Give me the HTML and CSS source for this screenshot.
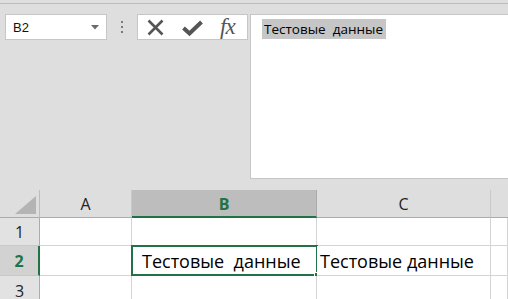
FILE: index.html
```html
<!DOCTYPE html>
<html>
<head>
<meta charset="utf-8">
<link rel="stylesheet" href="styles.css">
</head>
<body>
<div class="app">
  <div class="topstrip"></div>
  <div class="toolbar">
    <div class="left">
      <div class="controls">
        <div class="namebox">
          <span class="name">B2</span>
          <svg class="caret" width="8" height="5" viewBox="0 0 8 5"><path d="M0 0H8L4 4.5Z" fill="#6b6b6b"/></svg>
        </div>
        <div class="dots"><i></i><i></i><i></i></div>
        <div class="buttons">
          <svg class="icon" width="17" height="17" viewBox="0 0 17 17"><path d="M1.5 1.5L15.5 15.5M15.5 1.5L1.5 15.5" stroke="#555" stroke-width="2.6" fill="none"/></svg>
          <svg class="icon check" width="21" height="16" viewBox="0 0 21 16"><path d="M1.5 8L7.5 13.5L19.5 2" stroke="#555" stroke-width="4" fill="none" stroke-linejoin="miter"/></svg>
          <span class="fx">fx</span>
        </div>
      </div>
    </div>
    <div class="formula">
      <span class="ftext">Тестовые&nbsp; данные</span>
    </div>
  </div>
  <div class="sheet">
    <div class="corner"><svg width="21" height="18" viewBox="0 0 21 18"><path d="M21 0V18H0Z" fill="#b4b4b4"/></svg></div>
    <div class="colh">A</div>
    <div class="colh sel">B</div>
    <div class="colh">C</div>
    <div class="colh last"></div>

    <div class="rowh">1</div>
    <div class="cell"></div>
    <div class="cell"></div>
    <div class="cell"></div>
    <div class="cell"></div>

    <div class="rowh sel">2</div>
    <div class="cell"></div>
    <div class="cell active">Тестовые&nbsp; данные<span class="handle"></span></div>
    <div class="cell text">Тестовые данные</div>
    <div class="cell"></div>

    <div class="rowh">3</div>
    <div class="cell"></div>
    <div class="cell"></div>
    <div class="cell"></div>
    <div class="cell"></div>
  </div>
</div>
</body>
</html>
```
FILE: styles.css
```css
* { box-sizing: border-box; }
html, body { margin: 0; padding: 0; }
body {
  width: 508px;
  height: 299px;
  overflow: hidden;
  background: #dedede;
  font-family: "Open Sans", "Noto Sans", "DejaVu Sans", sans-serif;
}
.app { display: flex; flex-direction: column; width: 508px; }
.topstrip {
  height: 4px;
  border-bottom: 1px solid #bcbcbc;
  background: #dedede;
}
.toolbar {
  display: flex;
  height: 175px;
  padding-top: 10px;
}
.left { width: 250px; }
.controls { display: flex; align-items: flex-start; }
.namebox {
  margin-left: 5px;
  width: 102px;
  height: 26px;
  background: #fff;
  border: 1px solid #c6c6c6;
  display: flex;
  align-items: center;
  justify-content: space-between;
  padding: 0 7px 0 7px;
}
.name { font-size: 13px; color: #111; font-family: "Liberation Sans", Arial, sans-serif; }
.caret { margin-top: 1px; }
.dots {
  width: 30px;
  height: 26px;
  display: flex;
  flex-direction: column;
  align-items: center;
  justify-content: center;
  gap: 3px;
}
.dots i { display: block; width: 2px; height: 2px; background: #7a7a7a; }
.buttons {
  width: 111px;
  height: 26px;
  background: #fff;
  border: 1px solid #c6c6c6;
  display: flex;
  align-items: center;
  padding-left: 9px;
}
.check { margin-left: 18px; margin-top: 1px; }
.fx {
  font-family: "Liberation Serif", "DejaVu Serif", serif;
  font-style: italic;
  font-size: 23px;
  color: #555;
  margin-left: 17px;
  line-height: 1;
  letter-spacing: -1px;
  margin-top: -2px;
}
.formula {
  flex: 1;
  background: #fff;
  border: 1px solid #c6c6c6;
  border-right: none;
  padding: 2px 0 0 11px;
}
.ftext {
  display: inline-block;
  background: #c6c6c6;
  font-size: 13.5px;
  line-height: 20px;
  padding: 0 3px 0 2px;
  color: #000;
}
.sheet {
  margin-top: 11px;
  display: grid;
  grid-template-columns: 40px 92px 185px 174px 1fr;
  grid-template-rows: 28px 28px 30px 30px;
}
.corner {
  border-right: 1px solid #bdbdbd;
  border-bottom: 1px solid #ababab;
  display: flex;
  align-items: flex-end;
  justify-content: flex-end;
  padding: 0 3px 3px 0;
}
.colh {
  border-right: 1px solid #c8c8c8;
  border-bottom: 1px solid #ababab;
  display: flex;
  align-items: center;
  justify-content: center;
  font-size: 16px;
  color: #222;
  padding-top: 1px;
}
.colh.sel {
  background: #bdbdbd;
  border-bottom: 2px solid #217346;
  color: #217346;
  font-weight: bold;
  border-right: 1px solid #ababab;
}
.colh.last { border-right: none; }
.rowh {
  border-right: 1px solid #ababab;
  border-bottom: 1px solid #c8c8c8;
  display: flex;
  align-items: center;
  justify-content: center;
  font-size: 16px;
  color: #222;
  background: #e2e2e2;
}
.rowh.sel {
  background: #d2d2d2;
  color: #217346;
  font-weight: bold;
  border-right: 2px solid #217346;
}
.cell {
  background: #fff;
  border-right: 1px solid #d4d4d4;
  border-bottom: 1px solid #d4d4d4;
  font-size: 18px;
  color: #000;
  display: flex;
  align-items: center;
  white-space: nowrap;
  position: relative;
}
.cell.text { padding-left: 3px; }
.cell.active {
  border: 2px solid #217346;
  margin: -1px -1px 0 -1px;
  padding-left: 9px;
}
.handle {
  position: absolute;
  right: -4px;
  bottom: -4px;
  width: 6px;
  height: 6px;
  background: #217346;
  border: 1px solid #fff;
}
```
